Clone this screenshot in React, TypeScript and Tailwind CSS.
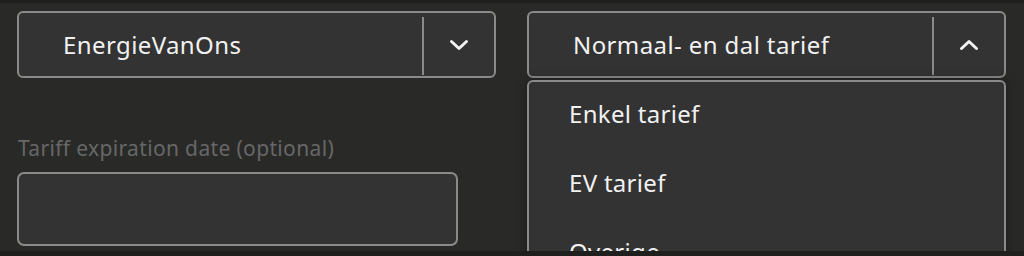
import React from "react";

function ChevronDown() {
  return (
    <svg width="20" height="12" viewBox="0 0 20 12" fill="none">
      <path d="M2.5 2.5 L10 9.5 L17.5 2.5" stroke="#f2f2f2" strokeWidth="3" strokeLinecap="round" strokeLinejoin="round" />
    </svg>
  );
}

function ChevronUp() {
  return (
    <svg width="20" height="12" viewBox="0 0 20 12" fill="none">
      <path d="M2.5 9.5 L10 2.5 L17.5 9.5" stroke="#f2f2f2" strokeWidth="3" strokeLinecap="round" strokeLinejoin="round" />
    </svg>
  );
}

function Select({ value, open }: { value: string; open?: boolean }) {
  return (
    <div className="flex h-[67px] w-full rounded-[6px] border-2 border-[#8a8a8a] bg-[#333333]">
      <div className="flex flex-1 items-center pl-[44px] text-[24px] leading-[30px] tracking-[0.4px] text-[#f1f1f1]">{value}</div>
      <div className="mt-[4px] mb-[1px] w-[2px] bg-[#8a8a8a]" />
      <div className="flex w-[70px] items-center justify-center">{open ? <ChevronUp /> : <ChevronDown />}</div>
    </div>
  );
}

export default function App() {
  return (
    <div
      className="relative h-[256px] w-[1024px] overflow-hidden bg-[#292a28]"
      style={{ fontFamily: '"Noto Sans", "Liberation Sans", sans-serif' }}
    >
      <div className="h-[3px] bg-[#1f201e]" />
      <div className="flex gap-[31px] pl-[17px] pr-[18px] pt-[8px]">
        <div className="flex w-[479px] flex-col">
          <Select value="EnergieVanOns" />
          <div className="mt-[55px] h-[30px] pl-[1px] text-[21px] leading-[30px] tracking-[0.35px] text-[#676767]">
            Tariff expiration date (optional)
          </div>
          <div className="mt-[9px] h-[74px] w-[441px] rounded-[7px] border-2 border-[#8a8a8a] bg-[#333333]" />
        </div>
        <div className="relative flex w-[479px] flex-col">
          <Select value="Normaal- en dal tarief" open />
          <div className="absolute left-0 top-[69px] w-[479px] rounded-t-[6px] border-2 border-[#8a8a8a] bg-[#333333] shadow-[0_0_12px_rgba(0,0,0,0.35)]">
            {["Enkel tarief", "EV tarief", "Overige"].map((t) => (
              <div key={t} className="flex h-[69px] items-center pl-[40px] text-[24px] leading-[30px] tracking-[0.3px] text-[#f1f1f1]">
                <span className="-mt-[5px]">{t}</span>
              </div>
            ))}
          </div>
        </div>
      </div>
      <div className="absolute bottom-0 left-0 h-[5px] w-full bg-[#1f201e]" />
    </div>
  );
}
